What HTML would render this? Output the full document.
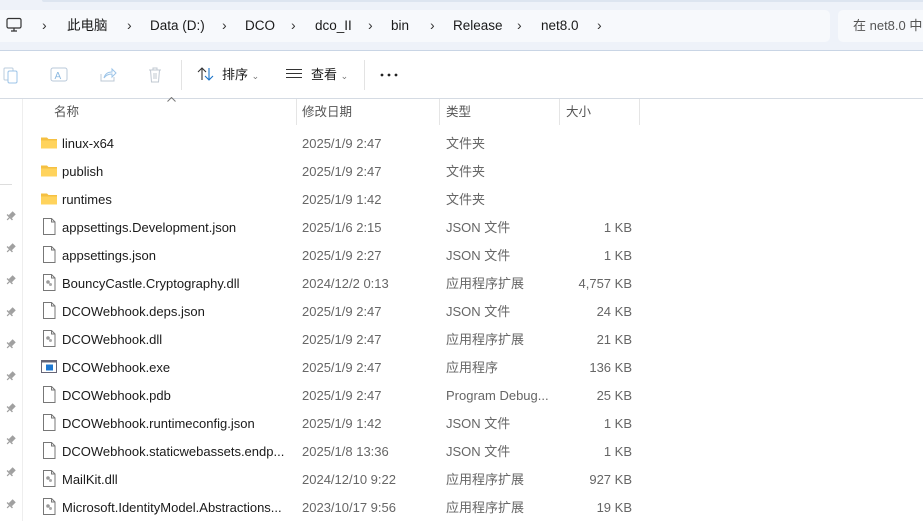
<!DOCTYPE html>
<html><head><meta charset="utf-8"><style>
*{margin:0;padding:0;box-sizing:border-box}
body{width:923px;height:521px;overflow:hidden;background:#fff;font-family:"Liberation Sans","Noto Sans CJK SC",sans-serif;font-size:13px;color:#1a1a1a;position:relative}
.a{position:absolute;white-space:nowrap;line-height:18px}
.top{left:0;top:0;width:923px;height:51px;background:#eef2f9;border-bottom:1px solid #c9d5e5}
.top2{left:42px;top:0;width:900px;height:2px;background:#dde5f0;border-radius:0 0 0 4px}
.addr{left:-5px;top:10px;width:835px;height:32px;background:#f7f9fc;border-radius:5px}
.srch{left:838px;top:10px;width:100px;height:32px;background:#f7f9fc;border-radius:5px;padding:7px 0 0 15px;color:#555;font-size:13px}
.bc{top:17px;font-size:13.5px;color:#1a1a1a}
.chev{top:16px;font-size:14px;color:#333}
.tb{top:66px;font-size:13px}
.hdr{top:98px;height:27px;left:0;width:923px;border-top:1px solid #d5dbe3}
.hs{top:99px;width:1px;height:26px;background:#e5e5e5}
.ht{top:103px;color:#555;font-size:12.5px}
.g{color:#666}
td{padding:0;white-space:nowrap}
</style></head><body>
<div class="a top"></div>
<div class="a top2"></div>
<div class="a addr"></div>
<div class="a srch">在 net8.0 中</div>
<svg class="a" style="left:6px;top:17px" width="16" height="16" viewBox="0 0 16 16"><rect x="1" y="1.5" width="14" height="9.5" rx="1.5" fill="none" stroke="#333" stroke-width="1.2"/><path d="M8 11v3M5 14h6" stroke="#333" stroke-width="1.2"/></svg>
<div class="a chev" style="left:42px">›</div>
<div class="a bc" style="left:67px">此电脑</div>
<div class="a chev" style="left:127px">›</div>
<div class="a bc" style="left:150px">Data (D:)</div>
<div class="a chev" style="left:222px">›</div>
<div class="a bc" style="left:245px">DCO</div>
<div class="a chev" style="left:291px">›</div>
<div class="a bc" style="left:315px">dco_II</div>
<div class="a chev" style="left:368px">›</div>
<div class="a bc" style="left:391px">bin</div>
<div class="a chev" style="left:430px">›</div>
<div class="a bc" style="left:453px">Release</div>
<div class="a chev" style="left:517px">›</div>
<div class="a bc" style="left:541px">net8.0</div>
<div class="a chev" style="left:597px">›</div>
<!-- toolbar -->
<svg class="a" style="left:3px;top:66px" width="16" height="18"><rect x="1" y="2" width="9" height="12" rx="1" fill="none" stroke="#bcd" stroke-width="1"/><rect x="5" y="5" width="9" height="12" rx="1.5" fill="#fff" stroke="#9cc4e8" stroke-width="1"/></svg>
<svg class="a" style="left:50px;top:66px" width="18" height="18"><rect x="1" y="2" width="16" height="13" rx="2" fill="none" stroke="#b8c8da"/><text x="4.5" y="13" font-size="10" fill="#8ab8e0" font-family="Liberation Sans">A</text></svg>
<svg class="a" style="left:99px;top:66px" width="18" height="18"><path d="M2 8v7h13v-4" fill="none" stroke="#bcc8d6"/><path d="M5 12c1-4 4-6 8-6V3l4 4-4 4V8c-3 0-6 1-8 4z" fill="none" stroke="#9cc4e8"/></svg>
<svg class="a" style="left:147px;top:66px" width="16" height="18"><path d="M2 4h12M6 4V2h4v2M3.5 4l1 12h7l1-12M7 7v6M9 7v6" fill="none" stroke="#c0c8d2"/></svg>
<div class="a" style="left:181px;top:60px;width:1px;height:30px;background:#e3e3e3"></div>
<svg class="a" style="left:197px;top:66px" width="18" height="16"><path d="M5 14V2M1 6l4-4 4 4" fill="none" stroke="#333" stroke-width="1.1"/><path d="M12 2v12M8 10l4 4 4-4" fill="none" stroke="#1a73c8" stroke-width="1.1"/></svg>
<div class="a tb" style="left:222px">排序 <span style="font-size:9px;color:#777">⌄</span></div>
<svg class="a" style="left:286px;top:69px" width="16" height="10"><path d="M0 .5h16M0 4.5h16M0 8.5h16" stroke="#333"/></svg>
<div class="a tb" style="left:311px">查看 <span style="font-size:9px;color:#777">⌄</span></div>
<div class="a" style="left:364px;top:60px;width:1px;height:30px;background:#e3e3e3"></div>
<svg class="a" style="left:380px;top:73px" width="18" height="4"><circle cx="2" cy="2" r="1.4" fill="#222"/><circle cx="9" cy="2" r="1.4" fill="#222"/><circle cx="16" cy="2" r="1.4" fill="#222"/></svg>
<!-- header -->
<div class="a hdr"></div>
<div class="a" style="left:22px;top:99px;width:1px;height:422px;background:#eee"></div>
<div class="a" style="left:0;top:184px;width:12px;height:1px;background:#ddd"></div>
<svg class="a" style="left:167px;top:97px" width="9" height="5"><path d="M.5 4.5l4-4 4 4" fill="none" stroke="#777"/></svg>
<div class="a ht" style="left:54px">名称</div>
<div class="a hs" style="left:296px"></div>
<div class="a ht" style="left:302px">修改日期</div>
<div class="a hs" style="left:439px"></div>
<div class="a ht" style="left:446px">类型</div>
<div class="a hs" style="left:559px"></div>
<div class="a ht" style="left:566px">大小</div>
<div class="a hs" style="left:639px"></div>
<svg class="a" style="left:0;top:0" width="30" height="521">
<defs><g id="pn"><g transform="rotate(45)"><rect x="-2.2" y="-4.5" width="4.4" height="5.5"/><rect x="-3.8" y="1" width="7.6" height="1.4"/><rect x="-0.6" y="2" width="1.2" height="3.5"/></g></g></defs>
<g fill="#a0a0a0">
<use href="#pn" x="11" y="216"/><use href="#pn" x="11" y="248"/><use href="#pn" x="11" y="280"/><use href="#pn" x="11" y="312"/><use href="#pn" x="11" y="344"/><use href="#pn" x="11" y="376"/><use href="#pn" x="11" y="408"/><use href="#pn" x="11" y="440"/><use href="#pn" x="11" y="472"/><use href="#pn" x="11" y="504"/>
</g></svg>
<svg class="a" style="left:40px;top:129px" width="20" height="392">
<defs>
<g id="fd"><path d="M1 2.5h6l1.5 1.5H17v9.5H1z" fill="#f5c042"/><path d="M1 5.5h16v8H1z" fill="#ffd35c"/></g>
<g id="fl"><path d="M3.5 .5h8l3.5 3.5v12.5h-11.5z" fill="#fff" stroke="#777" stroke-width="1"/><path d="M11.5 .5v3.5h3.5" fill="none" stroke="#777"/></g>
<g id="dl"><use href="#fl"/><circle cx="8" cy="8" r="1.8" fill="#999"/><circle cx="10.5" cy="10.5" r="1.5" fill="#aaa"/></g>
<g id="ex"><rect x="1.5" y="2.5" width="15" height="12" fill="#fff" stroke="#667"/><rect x="1.5" y="2.5" width="15" height="2" fill="#667"/><rect x="6" y="6.5" width="7" height="6" fill="#1f78d1"/></g>
</defs>
<use href="#fd" y="6"/><use href="#fd" y="34"/><use href="#fd" y="62"/>
<use href="#fl" y="89"/><use href="#fl" y="117"/><use href="#dl" y="145"/><use href="#fl" y="173"/><use href="#dl" y="201"/><use href="#ex" y="229"/><use href="#fl" y="257"/><use href="#fl" y="285"/><use href="#fl" y="313"/><use href="#dl" y="341"/><use href="#dl" y="369"/>
</svg>
<div class="a" style="left:0;top:130px;width:923px;line-height:28px">
<table style="border-collapse:collapse;font-size:13px">
<colgroup><col style="width:302px"><col style="width:144px"><col style="width:120px"><col style="width:66px"></colgroup>
<tbody style="line-height:28px">
<tr><td style="padding-left:62px">linux-x64</td><td class="g">2025/1/9 2:47</td><td class="g">文件夹</td><td></td></tr>
<tr><td style="padding-left:62px">publish</td><td class="g">2025/1/9 2:47</td><td class="g">文件夹</td><td></td></tr>
<tr><td style="padding-left:62px">runtimes</td><td class="g">2025/1/9 1:42</td><td class="g">文件夹</td><td></td></tr>
<tr><td style="padding-left:62px">appsettings.Development.json</td><td class="g">2025/1/6 2:15</td><td class="g">JSON 文件</td><td class="g" align="right">1 KB</td></tr>
<tr><td style="padding-left:62px">appsettings.json</td><td class="g">2025/1/9 2:27</td><td class="g">JSON 文件</td><td class="g" align="right">1 KB</td></tr>
<tr><td style="padding-left:62px">BouncyCastle.Cryptography.dll</td><td class="g">2024/12/2 0:13</td><td class="g">应用程序扩展</td><td class="g" align="right">4,757 KB</td></tr>
<tr><td style="padding-left:62px">DCOWebhook.deps.json</td><td class="g">2025/1/9 2:47</td><td class="g">JSON 文件</td><td class="g" align="right">24 KB</td></tr>
<tr><td style="padding-left:62px">DCOWebhook.dll</td><td class="g">2025/1/9 2:47</td><td class="g">应用程序扩展</td><td class="g" align="right">21 KB</td></tr>
<tr><td style="padding-left:62px">DCOWebhook.exe</td><td class="g">2025/1/9 2:47</td><td class="g">应用程序</td><td class="g" align="right">136 KB</td></tr>
<tr><td style="padding-left:62px">DCOWebhook.pdb</td><td class="g">2025/1/9 2:47</td><td class="g">Program Debug...</td><td class="g" align="right">25 KB</td></tr>
<tr><td style="padding-left:62px">DCOWebhook.runtimeconfig.json</td><td class="g">2025/1/9 1:42</td><td class="g">JSON 文件</td><td class="g" align="right">1 KB</td></tr>
<tr><td style="padding-left:62px">DCOWebhook.staticwebassets.endp...</td><td class="g">2025/1/8 13:36</td><td class="g">JSON 文件</td><td class="g" align="right">1 KB</td></tr>
<tr><td style="padding-left:62px">MailKit.dll</td><td class="g">2024/12/10 9:22</td><td class="g">应用程序扩展</td><td class="g" align="right">927 KB</td></tr>
<tr><td style="padding-left:62px">Microsoft.IdentityModel.Abstractions...</td><td class="g">2023/10/17 9:56</td><td class="g">应用程序扩展</td><td class="g" align="right">19 KB</td></tr>
</tbody></table></div>
</body></html>
